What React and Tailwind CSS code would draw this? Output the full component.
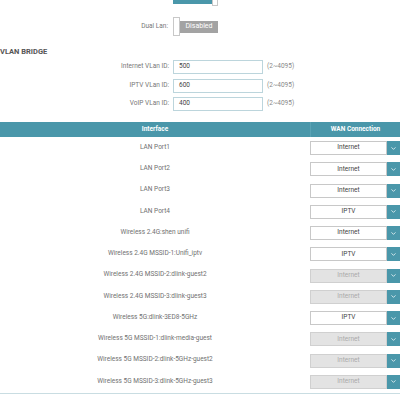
import { ChevronDown } from 'lucide-react'

const rows = [
  { name: 'LAN Port1', value: 'Internet' },
  { name: 'LAN Port2', value: 'Internet' },
  { name: 'LAN Port3', value: 'Internet' },
  { name: 'LAN Port4', value: 'IPTV' },
  { name: 'Wireless 2.4G:shen unifi', value: 'Internet' },
  { name: 'Wireless 2.4G MSSID-1:Unifi_iptv', value: 'IPTV' },
  { name: 'Wireless 2.4G MSSID-2:dlink-guest2', value: 'Internet', disabled: true },
  { name: 'Wireless 2.4G MSSID-3:dlink-guest3', value: 'Internet', disabled: true },
  { name: 'Wireless 5G:dlink-3ED8-5GHz', value: 'IPTV' },
  { name: 'Wireless 5G MSSID-1:dlink-media-guest', value: 'Internet', disabled: true },
  { name: 'Wireless 5G MSSID-2:dlink-5GHz-guest2', value: 'Internet', disabled: true },
  { name: 'Wireless 5G MSSID-3:dlink-5GHz-guest3', value: 'Internet', disabled: true },
]

const vlans = [
  { label: 'Internet VLan ID:', value: '500' },
  { label: 'IPTV VLan ID:', value: '600' },
  { label: 'VoIP VLan ID:', value: '400' },
]

export default function App() {
  return (
    <div className="w-[400px] h-[400px] overflow-hidden bg-white font-['Roboto','Liberation_Sans',sans-serif] text-[#666]">
      {/* toggle cut off at the top edge */}
      <div className="flex items-end h-[7px] overflow-hidden pl-[173px]">
        <div className="w-[39px] h-[12px] bg-[#4a97aa] mb-[3px]" />
        <div className="w-[6px] h-[19px] bg-white border border-[#c8c8c8] mb-[1px]" />
      </div>

      {/* Dual Lan */}
      <div className="flex items-center mt-[10px] h-[19px]">
        <div className="w-[170px] text-right text-[6.5px] text-[#777] pr-[2px]">Dual Lan:</div>
        <div className="ml-[3px] flex items-center">
          <div className="w-[7px] h-[19px] bg-white border border-[#c8c8c8]" />
          <div className="w-[38px] h-[12px] bg-[#a3a3a3] flex items-center justify-center text-white text-[7px]">Disabled</div>
        </div>
      </div>

      <div className="mt-[12px] text-[7.5px] leading-[8px] font-bold text-[#555]">VLAN BRIDGE</div>

      <div className="mt-[4px] flex flex-col gap-[4.5px]">
        {vlans.map(v => (
          <div key={v.label} className="flex items-center h-[14px]">
            <div className="w-[170px] text-right text-[6.5px] text-[#777] pr-[1px]">{v.label}</div>
            <div className="ml-[3px] w-[90px] h-[14px] border border-[#bcd5dc] flex items-center pl-[5px] text-[6.5px] text-[#444]">{v.value}</div>
            <div className="ml-[4px] text-[6.5px] text-[#888]">(2~4095)</div>
          </div>
        ))}
      </div>

      {/* interface table */}
      <div className="mt-[11px] border-b border-[#c9dde2] pb-[1px]">
        <div className="grid grid-cols-[310px_90px] h-[15px] bg-[#4a97aa] text-white text-[6.5px] font-bold">
          <div className="flex items-center justify-center">Interface</div>
          <div className="flex items-center justify-center border-l border-[#5aa3b5]">WAN Connection</div>
        </div>
        {rows.map(r => (
          <div key={r.name} className="grid grid-cols-[310px_90px] h-[21.25px] items-center">
            <div className="text-center text-[6.5px] text-[#707070]">{r.name}</div>
            <div className="flex h-[14px] mt-[1px]">
              <div className={`w-[77px] h-[14px] border flex items-center justify-center text-[6.5px] ${r.disabled ? 'bg-[#e3e3e3] border-[#d0d0d0] text-[#aaa]' : 'bg-white border-[#c8c8c8] text-[#444]'}`}>
                {r.value}
              </div>
              <div className="w-[13px] h-[14px] bg-[#4a97aa] flex items-center justify-center">
                <ChevronDown size={7} strokeWidth={2.5} color="white" />
              </div>
            </div>
          </div>
        ))}
      </div>
    </div>
  )
}
